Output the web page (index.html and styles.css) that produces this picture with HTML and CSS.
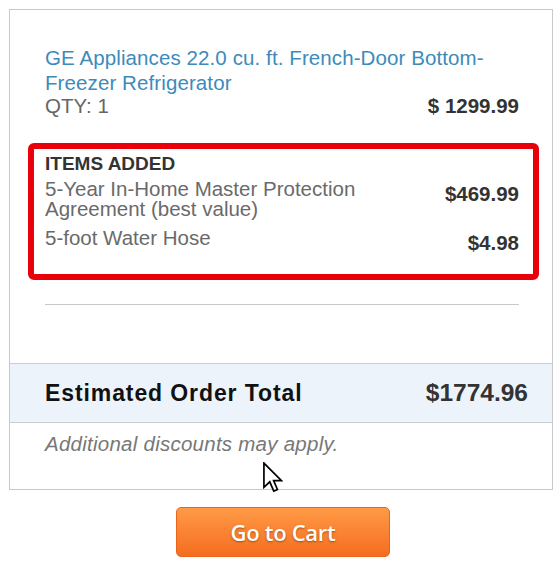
FILE: index.html
```html
<!DOCTYPE html>
<html lang="en">
<head>
  <meta charset="UTF-8">
  <title>Order Summary</title>
  <meta name="viewport" content="width=device-width,initial-scale=1">
  <link rel="stylesheet" href="styles.css">
</head>
<body>
  <div class="summary">
    <div class="summary-body">
      <a class="product-name" href="#">GE Appliances 22.0 cu. ft. French-Door Bottom-Freezer Refrigerator</a>
      <div class="qty-row">
        <span>QTY: 1</span>
        <span class="price">$ 1299.99</span>
      </div>
      <div class="added-box">
        <div class="added-title">ITEMS ADDED</div>
        <div class="item-row">
          <span class="item-name">5-Year In-Home Master Protection Agreement (best value)</span>
          <span class="item-price">$469.99</span>
        </div>
        <div class="item-row">
          <span class="item-name">5-foot Water Hose</span>
          <span class="item-price">$4.98</span>
        </div>
      </div>
      <hr class="divider">
    </div>
    <div class="total-row">
      <span class="total-label">Estimated Order Total</span>
      <span class="total-price">$1774.96</span>
    </div>
    <div class="note">Additional discounts may apply.</div>
    <!-- mouse pointer -->
    <svg class="cursor" width="20" height="31" viewBox="0 0 13 20">
      <path d="M0.6 0.6 L0.6 16.4 L4.4 12.8 L7 18.8 L9.4 17.8 L6.9 12 L12 12 Z" fill="#fff" stroke="#000" stroke-width="1.1" stroke-linejoin="miter"/>
    </svg>
  </div>
  <div class="cart-row">
    <button class="cart-btn">Go to Cart</button>
  </div>
</body>
</html>
```

FILE: styles.css
```css
body {
  margin: 0;
  padding: 0;
  background: #fff;
  font-family: 'Liberation Sans', Arial, sans-serif;
  color: #666;
}
.summary {
  position: relative;
  width: 542px;
  margin: 9px 0 0 9px;
  border: 1px solid #c9c9c9;
}
.summary-body {
  padding: 35px 33px 58px 35px;
}
.product-name {
  display: block;
  color: #3c8bbb;
  font-size: 20.5px;
  line-height: 25px;
  letter-spacing: 0.1px;
  text-decoration: none;
}
.qty-row {
  display: flex;
  justify-content: space-between;
  align-items: baseline;
  font-size: 20.5px;
  line-height: 22px;
  color: #666;
}
.price {
  font-weight: bold;
  font-size: 20.5px;
  color: #333;
}
.added-box {
  margin: 26px -20px 0 -17px;
  padding: 5px 14px 21px 11px;
  border: 6px solid #e8000b;
  border-radius: 6px;
}
.added-title {
  font-weight: bold;
  font-size: 19px;
  line-height: 20px;
  color: #333;
}
.item-row {
  display: flex;
  justify-content: space-between;
  align-items: flex-start;
  margin-top: 5px;
  font-size: 20.5px;
  line-height: 20px;
}
.item-row + .item-row {
  margin-top: 9px;
}
.item-name {
  flex: 1;
  padding-right: 20px;
  color: #6a6a6a;
}
.item-price {
  padding-top: 5px;
  font-weight: bold;
  color: #333;
}
.divider {
  margin: 24px 0 0 0;
  border: 0;
  border-top: 1px solid #c8c8c8;
}
.total-row {
  display: flex;
  justify-content: space-between;
  align-items: center;
  height: 58px;
  padding: 0 24px 0 35px;
  background: #edf3fb;
  border-top: 1px solid #c6cdd8;
  border-bottom: 1px solid #c6cdd8;
}
.total-label {
  font-weight: bold;
  font-size: 23px;
  letter-spacing: 0.9px;
  color: #111;
}
.total-price {
  font-weight: bold;
  font-size: 24.5px;
  color: #333;
}
.note {
  padding: 9px 35px 33px 35px;
  font-size: 20.5px;
  line-height: 24px;
  letter-spacing: 0.25px;
  font-style: italic;
  color: #777;
}
.cursor {
  position: absolute;
  left: 253px;
  top: 452px;
}
.cart-row {
  display: flex;
  justify-content: center;
  width: 544px;
  margin: 17px 0 0 9px;
  padding-left: 4px;
  box-sizing: border-box;
}
.cart-btn {
  width: 214px;
  height: 50px;
  border: 1px solid #e8661c;
  border-radius: 5px;
  background: linear-gradient(#ff9a46, #f56d20);
  color: #fff;
  font-family: 'Open Sans', sans-serif;
  font-weight: 600;
  font-size: 22px;
  letter-spacing: -0.3px;
  text-shadow: 0 1px 2px rgba(110, 45, 0, 0.6);
  cursor: pointer;
  outline: none;
}
```
